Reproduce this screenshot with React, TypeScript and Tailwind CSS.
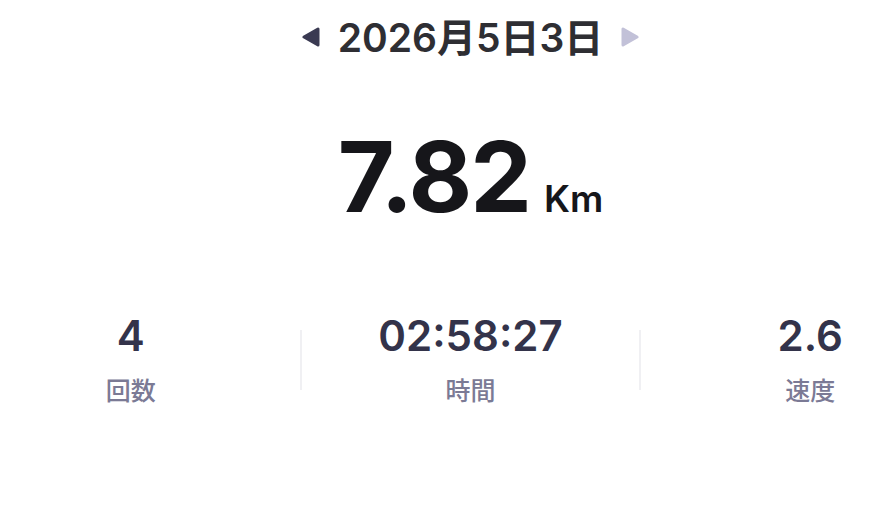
import React from "react";

const FONT = { fontFamily: '"Inter", "Noto Sans CJK JP", sans-serif' };

function Triangle({ dir, color }: { dir: "left" | "right"; color: string }) {
  const points = dir === "left" ? "17,2 17,18 3,10" : "3,2 3,18 17,10";
  return (
    <svg width="20" height="20" viewBox="0 0 20 20">
      <polygon points={points} fill={color} stroke={color} strokeWidth="3" strokeLinejoin="round" />
    </svg>
  );
}

type Stat = { value: string; label: string };

const stats: Stat[] = [
  { value: "4", label: "回数" },
  { value: "02:58:27", label: "時間" },
  { value: "2.6", label: "速度" },
];

function StatCell({ value, label }: Stat) {
  return (
    <div className="flex flex-col items-center">
      <span className="text-[42px] font-semibold text-[#33334a] leading-none">{value}</span>
      <span className="text-[25px] font-medium text-[#7b7a95] leading-none mt-[22px]">{label}</span>
    </div>
  );
}

export default function App() {
  return (
    <div className="w-[888px] h-[529px] overflow-hidden bg-white" style={FONT}>
      <div className="w-[1017px] -ml-[38px] flex flex-col items-center">
        {/* date selector */}
        <div className="flex items-center gap-[17px] pt-[14px] h-[60px]">
          <Triangle dir="left" color="#3a3a52" />
          <span className="text-[39px] font-semibold text-[#2e2e33] leading-none">2026月5日3日</span>
          <Triangle dir="right" color="#c2c1d8" />
        </div>

        {/* distance */}
        <div className="flex items-baseline gap-[14px] mt-[68px]">
          <span className="text-[98px] font-bold text-[#16161a] leading-none tracking-[-2px]">7.82</span>
          <span className="text-[37px] font-semibold text-[#16161a] leading-none">Km</span>
        </div>

        {/* stats */}
        <div className="w-full grid grid-cols-[1fr_2px_1fr_2px_1fr] items-center mt-[89px]">
          <StatCell {...stats[0]} />
          <div className="h-[60px] bg-[#f0f0f3]" />
          <StatCell {...stats[1]} />
          <div className="h-[60px] bg-[#f0f0f3]" />
          <StatCell {...stats[2]} />
        </div>
      </div>
    </div>
  );
}
